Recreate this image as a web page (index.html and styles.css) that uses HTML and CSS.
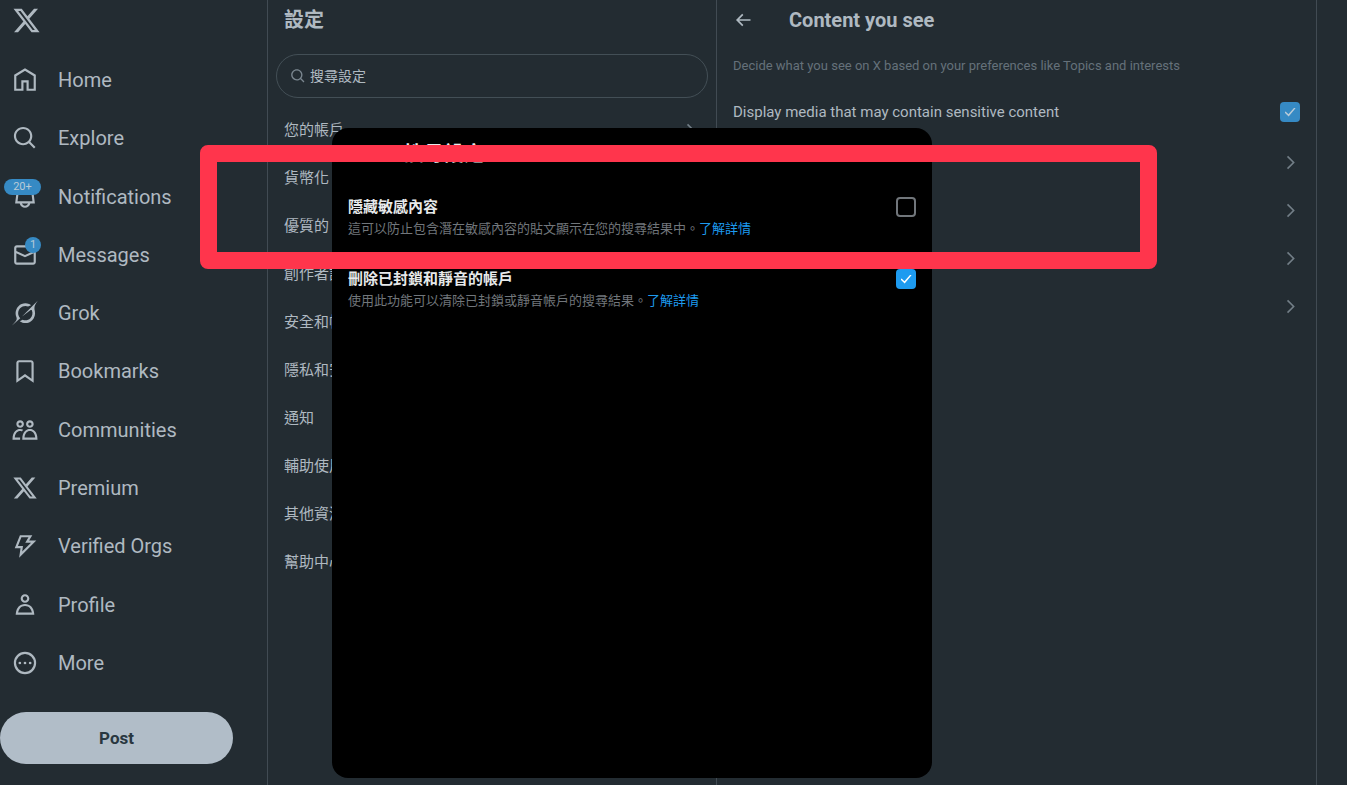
FILE: index.html
```html
<!DOCTYPE html>
<html lang="zh-Hant">
<head>
    <meta charset="UTF-8">
    <meta name="viewport" content="width=device-width, initial-scale=1.0">
    <title>設定 / X</title>
    <link rel="stylesheet" href="styles.css">
</head>
<body>
    <svg class="symbols" aria-hidden="true">
        <symbol id="x-logo" viewBox="0 0 24 24"><path d="M18.244 2.25h3.308l-7.227 8.26 8.502 11.24H16.17l-5.214-6.817L4.99 21.75H1.68l7.73-8.835L1.254 2.25H8.08l4.713 6.231zm-1.161 17.52h1.833L7.084 4.126H5.117z"/></symbol>
        <symbol id="search" viewBox="0 0 24 24"><path d="M10.25 3.75c-3.59 0-6.5 2.91-6.5 6.5s2.91 6.5 6.5 6.5c1.795 0 3.419-.726 4.596-1.904 1.178-1.177 1.904-2.801 1.904-4.596 0-3.59-2.91-6.5-6.5-6.5zm-8.5 6.5c0-4.694 3.806-8.5 8.5-8.5s8.5 3.806 8.5 8.5c0 1.986-.682 3.815-1.824 5.262l4.781 4.781-1.414 1.414-4.781-4.781c-1.447 1.142-3.276 1.824-5.262 1.824-4.694 0-8.5-3.806-8.5-8.5z"/></symbol>
        <symbol id="chevron" viewBox="0 0 24 24"><path d="M14.586 12L7.543 4.96l1.414-1.42L17.414 12l-8.457 8.46-1.414-1.42L14.586 12z"/></symbol>
    </svg>

    <div class="app">
        <header class="sidebar">
            <a class="logo" href="#" aria-label="X"><svg><use href="#x-logo"/></svg></a>
            <nav class="nav">
                <a href="#">
                    <span class="icon"><svg viewBox="0 0 24 24"><path class="line" d="M3 21h6.6v-7.8h4.8V21H21V7.8l-9-5.4-9 5.4z"/></svg></span>
                    Home
                </a>
                <a href="#">
                    <span class="icon"><svg><use href="#search"/></svg></span>
                    Explore
                </a>
                <a href="#">
                    <span class="icon"><svg viewBox="0 0 24 24"><path d="M19.993 9.042C19.48 5.017 16.054 2 11.996 2s-7.49 3.021-7.999 7.051L2.866 18H7.1c.463 2.282 2.481 4 4.9 4s4.437-1.718 4.9-4h4.236l-1.143-8.958zM12 20c-1.306 0-2.417-.835-2.829-2h5.658c-.412 1.165-1.523 2-2.829 2zm-6.866-4l.847-6.698C6.364 6.272 8.941 4 11.996 4s5.627 2.268 6.013 5.295L18.864 16H5.134z"/></svg><span class="badge wide">20+</span></span>
                    Notifications
                </a>
                <a href="#">
                    <span class="icon"><svg viewBox="0 0 24 24"><path d="M1.998 5.5c0-1.381 1.119-2.5 2.5-2.5h15c1.381 0 2.5 1.119 2.5 2.5v13c0 1.381-1.119 2.5-2.5 2.5h-15c-1.381 0-2.5-1.119-2.5-2.5v-13zm2.5-.5c-.276 0-.5.224-.5.5v2.764l8 3.638 8-3.636V5.5c0-.276-.224-.5-.5-.5h-15zm15.5 5.463l-8 3.636-8-3.638V18.5c0 .276.224.5.5.5h15c.276 0 .5-.224.5-.5v-8.037z"/></svg><span class="badge">1</span></span>
                    Messages
                </a>
                <a href="#">
                    <span class="icon"><svg viewBox="0 0 33 32"><path d="M12.745 20.54l10.97-8.19c.539-.4 1.307-.244 1.564.38 1.349 3.288.746 7.241-1.938 9.955-2.683 2.714-6.417 3.31-9.83 1.954l-3.728 1.745c5.347 3.697 11.84 2.782 15.898-1.324 3.219-3.255 4.216-7.692 3.284-11.693l.008.009c-1.351-5.878.332-8.227 3.782-13.031L33 0l-4.54 4.59v-.014L12.743 20.544m-2.263 1.987c-3.837-3.707-3.175-9.446.1-12.755 2.42-2.449 6.388-3.448 9.852-1.979l3.72-1.737c-.67-.49-1.53-1.017-2.515-1.387-4.455-1.854-9.789-.931-13.41 2.728-3.483 3.523-4.579 8.94-2.697 13.561 1.405 3.454-.899 5.898-3.22 8.364C1.49 30.2.666 31.074 0 32l10.478-9.466"/></svg></span>
                    Grok
                </a>
                <a href="#">
                    <span class="icon"><svg viewBox="0 0 24 24"><path d="M4 4.5C4 3.12 5.119 2 6.5 2h11C18.881 2 20 3.12 20 4.5v18.44l-8-5.71-8 5.71V4.5zM6.5 4c-.276 0-.5.22-.5.5v14.56l6-4.29 6 4.29V4.5c0-.28-.224-.5-.5-.5h-11z"/></svg></span>
                    Bookmarks
                </a>
                <a href="#">
                    <span class="icon"><svg viewBox="0 0 24 24"><path d="M7.501 19.917L7.471 21H.472l.029-1.027c.184-6.618 3.736-8.977 7-8.977.963 0 1.95.212 2.87.672-.444.478-.851 1.03-1.212 1.656-.507-.204-1.054-.329-1.658-.329-2.767 0-4.57 2.223-4.938 6.004H7.56c-.023.302-.05.599-.059.917zm15.998.056L23.528 21H9.472l.029-1.027c.184-6.618 3.736-8.977 7-8.977s6.816 2.358 7 8.977zM21.437 19c-.367-3.781-2.17-6.004-4.938-6.004s-4.57 2.223-4.938 6.004h9.875zm-4.938-9c-.799 0-1.527-.279-2.116-.73-.836-.64-1.384-1.638-1.384-2.77 0-1.93 1.567-3.5 3.5-3.5s3.5 1.57 3.5 3.5c0 1.132-.548 2.13-1.384 2.77-.589.451-1.317.73-2.116.73zm-1.5-3.5c0 .827.673 1.5 1.5 1.5s1.5-.673 1.5-1.5-.673-1.5-1.5-1.5-1.5.673-1.5 1.5zM7.5 3C9.433 3 11 4.57 11 6.5S9.433 10 7.5 10 4 8.43 4 6.5 5.567 3 7.5 3zm0 2C6.673 5 6 5.673 6 6.5S6.673 8 7.5 8 9 7.327 9 6.5 8.327 5 7.5 5z"/></svg></span>
                    Communities
                </a>
                <a href="#">
                    <span class="icon"><svg><use href="#x-logo"/></svg></span>
                    Premium
                </a>
                <a href="#">
                    <span class="icon"><svg viewBox="0 0 24 24"><path d="M7.323 2h11.443l-3 5h6.648L6.586 22.83 7.847 14H2.523l4.8-12zm1.354 2l-3.2 8h4.676l-.739 5.17L17.586 9h-5.352l3-5H8.677z"/></svg></span>
                    Verified Orgs
                </a>
                <a href="#">
                    <span class="icon"><svg viewBox="0 0 24 24"><path d="M5.651 19h12.698c-.337-1.8-1.023-3.21-1.945-4.19C15.318 13.65 13.838 13 12 13s-3.317.65-4.404 1.81c-.922.98-1.608 2.39-1.945 4.19zm.486-5.56C7.627 11.85 9.648 11 12 11s4.373.85 5.863 2.44c1.477 1.58 2.366 3.8 2.632 6.46l.11 1.1H3.395l.11-1.1c.266-2.66 1.155-4.88 2.632-6.46zM12 4c-1.105 0-2 .9-2 2s.895 2 2 2 2-.9 2-2-.895-2-2-2zM8 6c0-2.21 1.791-4 4-4s4 1.79 4 4-1.791 4-4 4-4-1.79-4-4z"/></svg></span>
                    Profile
                </a>
                <a href="#">
                    <span class="icon"><svg viewBox="0 0 24 24"><circle class="line" cx="12" cy="12" r="9.3"/><circle cx="7.25" cy="12" r="1.25"/><circle cx="12" cy="12" r="1.25"/><circle cx="16.75" cy="12" r="1.25"/></svg></span>
                    More
                </a>
            </nav>
            <button class="post" type="button">Post</button>
        </header>

        <section class="settings">
            <h2>設定</h2>
            <label class="search">
                <svg><use href="#search"/></svg>
                <input type="text" placeholder="搜尋設定" aria-label="搜尋設定">
            </label>
            <div class="list">
                <a href="#">您的帳戶<svg><use href="#chevron"/></svg></a>
                <a href="#">貨幣化<svg><use href="#chevron"/></svg></a>
                <a href="#">優質的<svg><use href="#chevron"/></svg></a>
                <a href="#">創作者訂<svg><use href="#chevron"/></svg></a>
                <a href="#">安全和帳戶<svg><use href="#chevron"/></svg></a>
                <a href="#">隱私和安全<svg><use href="#chevron"/></svg></a>
                <a href="#">通知<svg><use href="#chevron"/></svg></a>
                <a href="#">輔助使用<svg><use href="#chevron"/></svg></a>
                <a href="#">其他資源<svg><use href="#chevron"/></svg></a>
                <a href="#">幫助中心<svg><use href="#chevron"/></svg></a>
            </div>
        </section>

        <main class="detail">
            <div class="detail-head">
                <button class="back" type="button" aria-label="Back"><svg viewBox="0 0 24 24"><path d="M7.414 13l5.043 5.04-1.414 1.42L3.586 12l7.457-7.46 1.414 1.42L7.414 11H21v2H7.414z"/></svg></button>
                <h2>Content you see</h2>
            </div>
            <p class="hint">Decide what you see on X based on your preferences like Topics and interests</p>
            <label class="option">
                Display media that may contain sensitive content
                <input type="checkbox" checked>
            </label>
            <div class="list">
                <a href="#" aria-label="Topics"><svg><use href="#chevron"/></svg></a>
                <a href="#" aria-label="Interests"><svg><use href="#chevron"/></svg></a>
                <a href="#" aria-label="Explore settings"><svg><use href="#chevron"/></svg></a>
                <a href="#" aria-label="Search settings"><svg><use href="#chevron"/></svg></a>
            </div>
        </main>
    </div>

    <div class="modal" role="dialog" aria-labelledby="modal-title">
        <h2 id="modal-title">搜尋設定</h2>
        <div class="choices">
            <div class="choice">
                <div>
                    <label for="hide">隱藏敏感內容</label>
                    <p>這可以防止包含潛在敏感內容的貼文顯示在您的搜尋結果中。<a href="#">了解詳情</a></p>
                </div>
                <input type="checkbox" id="hide">
            </div>
            <div class="choice">
                <div>
                    <label for="remove">刪除已封鎖和靜音的帳戶</label>
                    <p>使用此功能可以清除已封鎖或靜音帳戶的搜尋結果。<a href="#">了解詳情</a></p>
                </div>
                <input type="checkbox" id="remove" checked>
            </div>
        </div>
    </div>

    <div class="highlight"></div>
</body>
</html>
```
FILE: styles.css
```css
* {
    box-sizing: border-box;
}
body {
    margin: 0;
    position: relative;
    background-color: #232c32;
    color: #afb9c1;
    font-family: Roboto, "Noto Sans CJK TC", sans-serif;
    font-size: 15px;
    line-height: 20px;
}
h2, p {
    margin: 0;
}
h2 {
    font-size: 20px;
    line-height: 24px;
}
a {
    color: inherit;
    text-decoration: none;
}
svg {
    display: block;
    fill: currentColor;
}
button {
    font: inherit;
    border: none;
    padding: 0;
    cursor: pointer;
}
.symbols {
    position: absolute;
    width: 0;
    height: 0;
}
.line {
    fill: none;
    stroke: currentColor;
    stroke-width: 2;
}
.app {
    display: grid;
    grid-template-columns: 268px 449fr 600fr 30px;
    min-height: 100vh;
}

/* left navigation */
.sidebar {
    display: flex;
    flex-direction: column;
    border-right: 1px solid #414b53;
    padding-bottom: 21px;
}
.logo {
    padding: 6px 12px 16px;
}
.logo svg {
    width: 29px;
    height: 29px;
}
.nav {
    flex: 1;
    display: flex;
    flex-direction: column;
}
.nav a {
    flex: 1;
    display: flex;
    align-items: center;
    gap: 20px;
    padding-left: 12px;
    font-size: 20px;
    line-height: 24px;
}
.icon {
    position: relative;
}
.icon svg {
    width: 26px;
    height: 26px;
}
.badge {
    position: absolute;
    top: -5px;
    right: -3px;
    min-width: 16px;
    height: 16px;
    border-radius: 8px;
    background-color: #368ac4;
    color: #b9cbd8;
    font-size: 11px;
    line-height: 16px;
    text-align: center;
}
.badge.wide {
    min-width: 37px;
}
.post {
    width: 233px;
    height: 52px;
    margin-top: 20px;
    border-radius: 26px;
    background-color: #b1bdc8;
    color: #293740;
    font-size: 17px;
    font-weight: bold;
}

/* settings list */
.settings {
    border-right: 1px solid #414b53;
}
.settings h2 {
    padding: 8px 16px;
}
.search {
    display: flex;
    align-items: center;
    gap: 4px;
    height: 44px;
    margin: 14px 8px 8px;
    padding: 0 13px;
    border: 1px solid #434f56;
    border-radius: 22px;
}
.search svg {
    width: 16px;
    height: 16px;
    color: #7b8790;
}
.search input {
    flex: 1;
    padding: 0;
    border: none;
    outline: none;
    background: none;
    color: inherit;
    font: inherit;
    font-size: 14px;
}
.search input::placeholder {
    color: #afb9c1;
    opacity: 1;
}
.list a {
    display: flex;
    align-items: center;
    justify-content: space-between;
    height: 48px;
    padding: 0 16px;
}
.list svg {
    width: 19px;
    height: 19px;
    margin-left: auto;
    color: #727e87;
}

/* content you see */
.detail {
    border-right: 1px solid #414b53;
}
.detail-head {
    display: flex;
    align-items: center;
    gap: 36px;
    padding: 8px 16px;
}
.back {
    background: none;
    color: inherit;
}
.back svg {
    width: 20px;
    height: 20px;
}
.hint {
    padding: 16px 16px 26px;
    color: #65717a;
    font-size: 13px;
    line-height: 20px;
}
.option {
    display: flex;
    align-items: center;
    justify-content: space-between;
    padding: 0 16px 16px;
}
input[type="checkbox"] {
    appearance: none;
    flex: none;
    width: 20px;
    height: 20px;
    margin: 0;
    border: 2px solid #71767b;
    border-radius: 4px;
}
input[type="checkbox"]:checked {
    display: grid;
    place-items: center;
    border: none;
    background-color: #1d9bf0;
}
input[type="checkbox"]:checked::before {
    content: "";
    width: 11px;
    height: 9px;
    background-color: #fff;
    clip-path: polygon(0 56%, 10% 44%, 36% 76%, 90% 0, 100% 8%, 38% 100%);
}
.option input[type="checkbox"]:checked {
    background-color: #368ac4;
}
.option input[type="checkbox"]:checked::before {
    background-color: #b9cbd8;
}

/* search settings dialog */
.modal {
    position: absolute;
    top: 128px;
    left: 332px;
    width: 600px;
    height: 650px;
    border-radius: 16px;
    background-color: #000;
    color: #e7e9ea;
}
.modal h2 {
    padding: 14px 72px 15px;
}
.choices {
    display: flex;
    flex-direction: column;
    gap: 30px;
    padding: 16px;
}
.choice {
    display: flex;
    justify-content: space-between;
}
.choice label {
    display: block;
    font-weight: bold;
}
.choice p {
    margin-top: 2px;
    color: #71767b;
    font-size: 13px;
}
.choice a {
    color: #1d9bf0;
}

.highlight {
    position: absolute;
    top: 145px;
    left: 200px;
    width: 957px;
    height: 124px;
    border: 17px solid #ff354c;
    border-radius: 8px;
    pointer-events: none;
}
```
